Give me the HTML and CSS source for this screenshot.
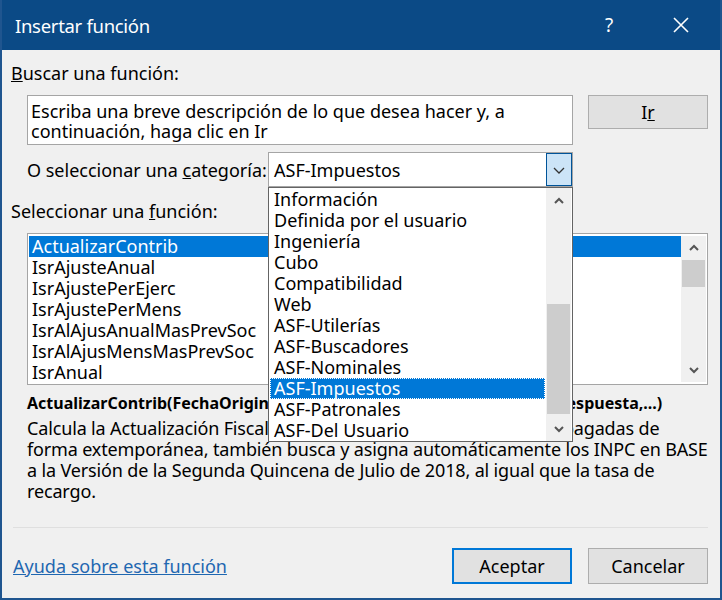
FILE: index.html
```html
<!DOCTYPE html>
<html lang="es">

<head>
    <meta charset="UTF-8">
    <meta name="viewport" content="width=device-width, initial-scale=1.0">
    <title>Insertar función</title>
    <link rel="stylesheet" href="styles.css">
</head>

<body>
    <div class="dialog">
        <div class="titlebar">
            <span class="title">Insertar función</span>
            <span class="help">?</span>
            <span class="close">
                <svg width="18" height="18" viewBox="0 0 18 18"><path d="M2 2 L16 16 M16 2 L2 16" stroke="#fff" stroke-width="1.6" fill="none"/></svg>
            </span>
        </div>

        <div class="content">
            <div class="label"><u>B</u>uscar una función:</div>

            <div class="search-row">
                <div class="search-box">Escriba una breve descripción de lo que desea hacer y, a<br>continuación, haga clic en Ir</div>
                <button class="btn">I<u>r</u></button>
            </div>

            <div class="category-row">
                <span class="category-label">O seleccionar una <u>c</u>ategoría:</span>
                <div class="combo">
                    <span class="combo-value">ASF-Impuestos</span>
                    <span class="combo-arrow">
                        <svg width="14" height="10" viewBox="0 0 14 10"><polyline points="2,3 7,8 12,3" stroke="#333" stroke-width="1.3" fill="none"/></svg>
                    </span>

                    <!-- dropdown opened over the dialog -->
                    <div class="dropdown">
                        <ul class="dropdown-items">
                            <li>Información</li>
                            <li>Definida por el usuario</li>
                            <li>Ingeniería</li>
                            <li>Cubo</li>
                            <li>Compatibilidad</li>
                            <li>Web</li>
                            <li>ASF-Utilerías</li>
                            <li>ASF-Buscadores</li>
                            <li>ASF-Nominales</li>
                            <li class="selected">ASF-Impuestos</li>
                            <li>ASF-Patronales</li>
                            <li>ASF-Del Usuario</li>
                        </ul>
                        <div class="scrollbar dropdown-scroll">
                            <span class="arrow up">
                                <svg width="12" height="8" viewBox="0 0 12 8"><polyline points="2,6 6,2 10,6" stroke="#555" stroke-width="2" fill="none"/></svg>
                            </span>
                            <span class="track"><span class="thumb"></span></span>
                            <span class="arrow down">
                                <svg width="12" height="8" viewBox="0 0 12 8"><polyline points="2,2 6,6 10,2" stroke="#555" stroke-width="2" fill="none"/></svg>
                            </span>
                        </div>
                    </div>
                </div>
            </div>

            <div class="label select-label">Seleccionar una <u>f</u>unción:</div>

            <div class="listbox">
                <ul class="list-items">
                    <li class="selected">ActualizarContrib</li>
                    <li>IsrAjusteAnual</li>
                    <li>IsrAjustePerEjerc</li>
                    <li>IsrAjustePerMens</li>
                    <li>IsrAlAjusAnualMasPrevSoc</li>
                    <li>IsrAlAjusMensMasPrevSoc</li>
                    <li>IsrAnual</li>
                </ul>
                <div class="scrollbar list-scroll">
                    <span class="arrow up">
                        <svg width="12" height="8" viewBox="0 0 12 8"><polyline points="2,6 6,2 10,6" stroke="#555" stroke-width="2" fill="none"/></svg>
                    </span>
                    <span class="track"><span class="thumb"></span></span>
                    <span class="arrow down">
                        <svg width="12" height="8" viewBox="0 0 12 8"><polyline points="2,2 6,6 10,2" stroke="#555" stroke-width="2" fill="none"/></svg>
                    </span>
                </div>
            </div>

            <div class="signature">ActualizarContrib(FechaOriginal,FechaPago,Importe,Contribucion,Respuesta,...)</div>
            <div class="description">Calcula la Actualización Fiscal de las Contribuciones Omitidas no pagadas de<br>forma extemporánea, también busca y asigna automáticamente los INPC en BASE<br>a la Versión de la Segunda Quincena de Julio de 2018, al igual que la tasa de<br>recargo.</div>

            <div class="separator"></div>

            <div class="footer">
                <a href="#" class="help-link">Ayuda sobre esta función</a>
                <div class="buttons">
                    <button class="btn default">Aceptar</button>
                    <button class="btn">Cancelar</button>
                </div>
            </div>
        </div>
    </div>
</body>

</html>
```

FILE: styles.css
```css
body {
    margin: 0;
    padding: 0;
    font-family: "Noto Sans", sans-serif;
    font-size: 18px;
    color: #000;
}

.dialog {
    width: 722px;
    height: 600px;
    box-sizing: border-box;
    background-color: #f0f0f0;
    border: 2px solid #1f558f;
    border-top: none;
    overflow: hidden;
}

.titlebar {
    height: 50px;
    margin: 0 -2px;
    background-color: #0b4a86;
    color: #fff;
    display: flex;
    align-items: center;
    padding: 0 0 0 15px;
}

.title {
    flex: 1;
    font-size: 18.5px;
    letter-spacing: -0.3px;
}

.help {
    font-size: 19px;
    width: 30px;
    margin-right: 37px;
}

.close {
    width: 50px;
    display: flex;
    align-items: center;
}

.content {
    padding: 13px 12px 0 9px;
}

.label {
    line-height: 21px;
}

.search-row {
    display: flex;
    margin: 11px 0 0 16px;
    gap: 15px;
}

.search-box {
    width: 546px;
    height: 50px;
    box-sizing: border-box;
    background-color: #fff;
    border: 1px solid #a5a5a5;
    padding: 5px 3px;
    line-height: 20px;
    white-space: nowrap;
}

.btn {
    width: 120px;
    height: 34px;
    background-color: #e1e1e1;
    border: 1px solid #adadad;
    font-family: "Noto Sans", sans-serif;
    font-size: 18px;
    color: #000;
    padding: 0;
}

.category-row {
    display: flex;
    align-items: center;
    margin: 7px 0 0 16px;
}

.category-label {
    width: 241px;
    white-space: nowrap;
}

.combo {
    position: relative;
    width: 305px;
    height: 35px;
    box-sizing: border-box;
    background-color: #fff;
    border: 1px solid #a5a5a5;
    display: flex;
    align-items: center;
}

.combo-value {
    flex: 1;
    padding-left: 5px;
}

.combo-arrow {
    width: 26px;
    height: 33px;
    box-sizing: border-box;
    background-color: #cce4f7;
    border: 1px solid #005499;
    display: flex;
    align-items: center;
    justify-content: center;
}

.dropdown {
    position: absolute;
    left: -1px;
    top: 34px;
    width: 305px;
    height: 255px;
    box-sizing: border-box;
    background-color: #fff;
    border: 1px solid #646464;
    display: flex;
    z-index: 2;
}

.dropdown-items,
.list-items {
    list-style: none;
    margin: 0;
    padding: 0;
    flex: 1;
}

.dropdown-items {
    padding: 1px 1px 0 1px;
}

.dropdown-items li {
    height: 21px;
    line-height: 21px;
    padding-left: 4px;
    white-space: nowrap;
}

.dropdown-items li.selected {
    background-color: #0078d7;
    color: #fff;
    outline: 1px dotted #fff;
    outline-offset: -1px;
}

.scrollbar {
    width: 25px;
    background-color: #f0f0f0;
    display: flex;
    flex-direction: column;
}

.arrow {
    height: 25px;
    display: flex;
    align-items: center;
    justify-content: center;
}

.track {
    flex: 1;
    display: flex;
    flex-direction: column;
}

.thumb {
    display: block;
    background-color: #cdcdcd;
    margin: 0 1px;
}

.dropdown-scroll {
    margin-right: 1px;
}

.dropdown-scroll .thumb {
    height: 110px;
    margin-top: 91px;
}

.select-label {
    margin-top: 14px;
}

.listbox {
    display: flex;
    margin: 11px 0 0 16px;
    height: 152px;
    box-sizing: border-box;
    background-color: #fff;
    border: 1px solid #a5a5a5;
    padding: 2px 1px 2px 1px;
}

.list-items li {
    height: 21px;
    line-height: 21px;
    padding-left: 3px;
}

.list-items li.selected {
    background-color: #0078d7;
    color: #fff;
}

.list-scroll .arrow {
    height: 24px;
}

.list-scroll .thumb {
    height: 27px;
}

.signature {
    margin: 8px 0 0 16px;
    font-weight: bold;
    font-size: 16px;
    line-height: 21px;
    white-space: nowrap;
}

.description {
    margin: 4px 0 0 16px;
    line-height: 21px;
    letter-spacing: -0.15px;
    white-space: nowrap;
}

.separator {
    margin: 25px 0 0 2px;
    border-top: 1px solid #dfdfdf;
}

.footer {
    display: flex;
    align-items: center;
    justify-content: space-between;
    margin-top: 20px;
}

.help-link {
    color: #1f67b1;
    padding-left: 2px;
}

.buttons {
    display: flex;
    gap: 16px;
}

.btn.default {
    border: 2px solid #0078d7;
}

.footer .btn {
    height: 36px;
}
```
